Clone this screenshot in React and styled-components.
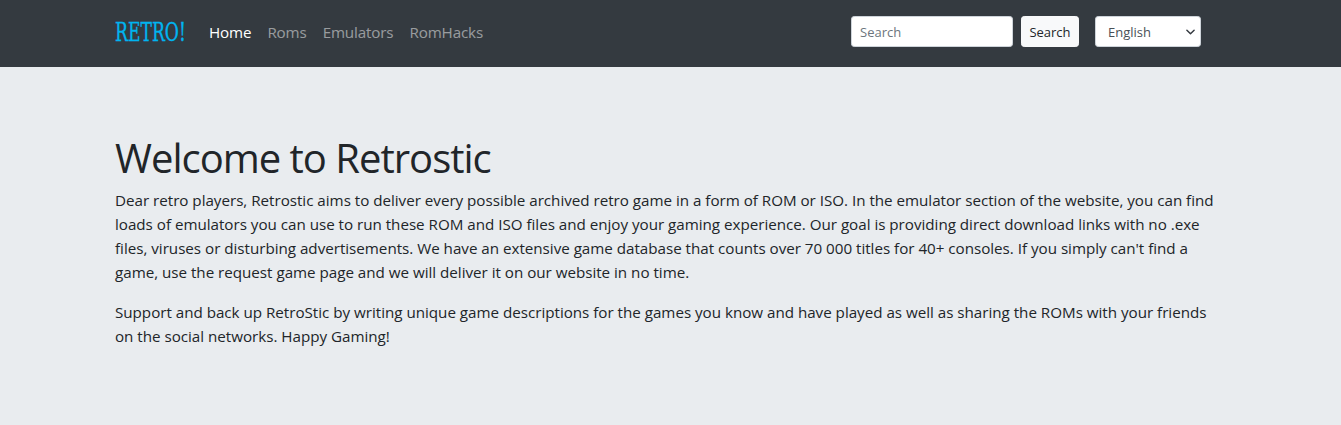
import React from 'react'
import styled, { createGlobalStyle } from 'styled-components'

const GlobalStyle = createGlobalStyle`
  html, body {
    margin: 0;
    background: #e9ecef;
    font-family: "Open Sans", "Noto Sans", sans-serif;
    color: #212529;
  }
`

const Navbar = styled.nav`
  box-sizing: border-box;
  height: 67px;
  background: #343a40;
  display: flex;
  align-items: center;
  padding: 0 140px 4px 115px;
`

const Brand = styled.a`
  width: 70px;
  margin-right: 16px;
  font-family: "DejaVu Serif", "Liberation Mono", serif;
  font-size: 26px;
  line-height: 30px;
  color: #00b4f0;
  -webkit-text-stroke: 0.4px #00b4f0;
  white-space: nowrap;
  display: inline-block;
  transform: scaleX(0.66);
  transform-origin: left center;
`

const NavList = styled.div`
  display: flex;
  flex: 1;
`

const NavLink = styled.a`
  padding: 0 8px;
  font-size: 15.2px;
  letter-spacing: -0.14px;
  color: ${p => (p.$active ? '#fff' : 'rgba(255, 255, 255, 0.5)')};
`

const SearchForm = styled.form`
  display: flex;
  gap: 8px;
  margin-right: 16px;
`

const SearchInput = styled.input`
  box-sizing: border-box;
  width: 162px;
  height: 31px;
  padding: 0 8px;
  border: 1px solid #ced4da;
  border-radius: 3.2px;
  background: #fff;
  font-family: inherit;
  font-size: 13px;
  color: #212529;
  &::placeholder {
    color: #6c757d;
  }
`

const SearchButton = styled.button`
  box-sizing: border-box;
  width: 58px;
  height: 31px;
  padding: 0;
  border: 1px solid #f8f9fa;
  border-radius: 3.2px;
  background: #f8f9fa;
  font-family: inherit;
  font-size: 13px;
  color: #212529;
`

const LangSelect = styled.div`
  box-sizing: border-box;
  width: 106px;
  height: 31px;
  padding: 0 5px 0 12px;
  border: 1px solid #ced4da;
  border-radius: 3.2px;
  background: #fff;
  display: flex;
  align-items: center;
  justify-content: space-between;
  font-size: 13px;
  color: #495057;
`

const Jumbotron = styled.main`
  padding: 67px 125px 0 115px;
`

const Heading = styled.h1`
  margin: 0 0 6px;
  font-size: 40px;
  font-weight: 400;
  line-height: 48px;
  letter-spacing: -1px;
`

const Para = styled.p`
  margin: 0 0 16px;
  font-size: 15.2px;
  line-height: 24px;
  letter-spacing: -0.02px;
`

const App = () => {
  return (
    <>
      <GlobalStyle />
      <Navbar>
        <Brand>RETRO!</Brand>
        <NavList>
          <NavLink $active>Home</NavLink>
          <NavLink>Roms</NavLink>
          <NavLink>Emulators</NavLink>
          <NavLink>RomHacks</NavLink>
        </NavList>
        <SearchForm>
          <SearchInput placeholder="Search" />
          <SearchButton type="button">Search</SearchButton>
        </SearchForm>
        <LangSelect>
          English
          <svg width="9" height="6" viewBox="0 0 10 6" fill="none" stroke="#343a40" strokeWidth="1.6" strokeLinecap="round" strokeLinejoin="round">
            <path d="M1 1l4 4 4-4" />
          </svg>
        </LangSelect>
      </Navbar>
      <Jumbotron>
        <Heading>Welcome to Retrostic</Heading>
        <Para>
          Dear retro players, Retrostic aims to deliver every possible archived retro game in a form of ROM or ISO. In the emulator section of the website, you can find loads of emulators you can use to run these ROM and ISO files and enjoy your gaming experience. Our goal is providing direct download links with no .exe files, viruses or disturbing advertisements. We have an extensive game database that counts over 70 000 titles for 40+ consoles. If you simply can't find a game, use the request game page and we will deliver it on our website in no time.
        </Para>
        <Para>
          Support and back up RetroStic by writing unique game descriptions for the games you know and have played as well as sharing the ROMs with your friends on the social networks. Happy Gaming!
        </Para>
      </Jumbotron>
    </>
  )
}

export default App
